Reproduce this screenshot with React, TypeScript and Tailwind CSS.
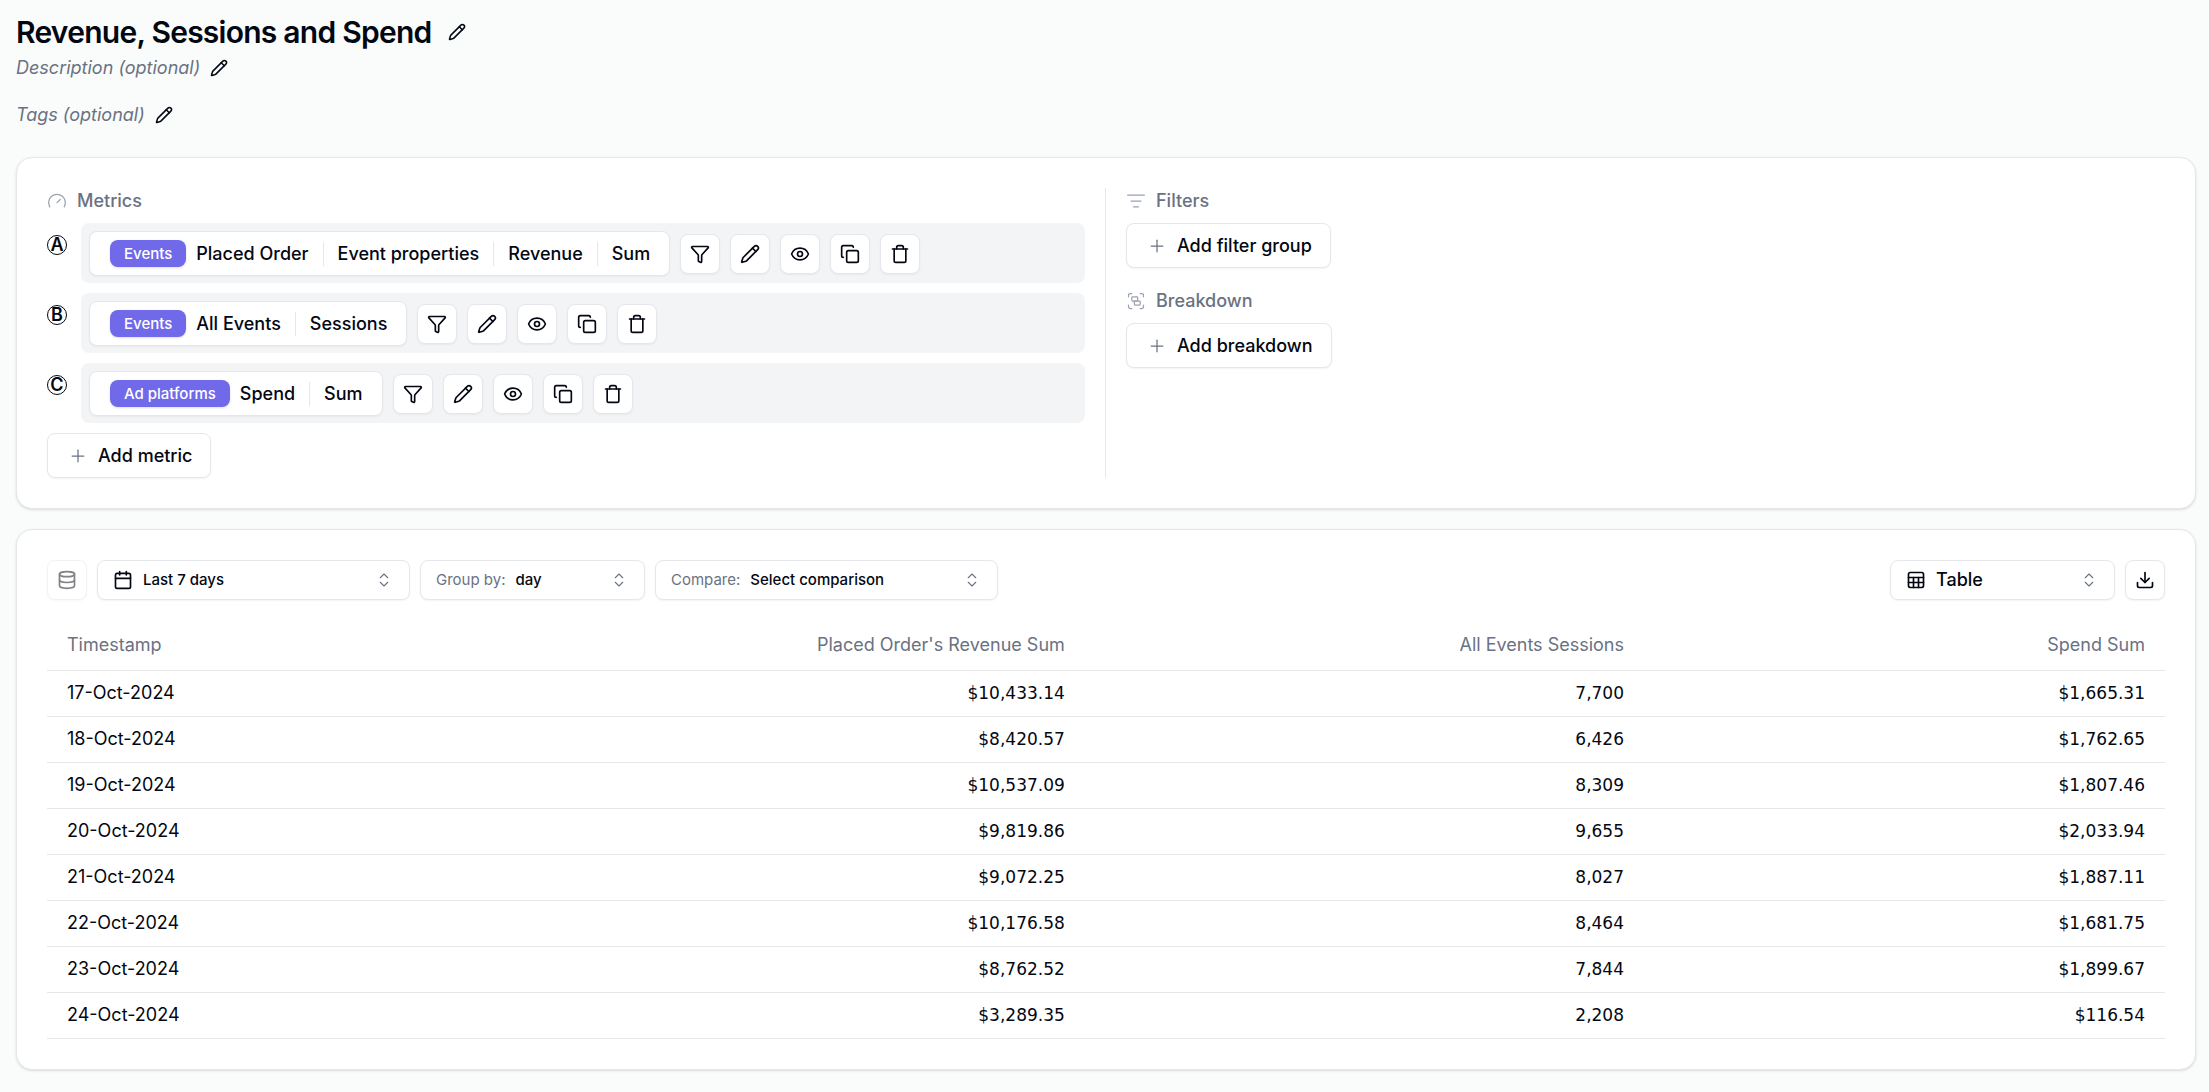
import React from 'react';
import {
  Calendar,
  ChevronsUpDown,
  Copy,
  Database,
  Download,
  Eye,
  Funnel,
  Gauge,
  Group,
  ListFilter,
  LucideIcon,
  Pencil,
  Plus,
  Sheet,
  Trash,
} from 'lucide-react';

interface Metric {
  letter: string;
  source: string;
  parts: string[];
}

const METRICS: Metric[] = [
  { letter: 'A', source: 'Events', parts: ['Placed Order', 'Event properties', 'Revenue', 'Sum'] },
  { letter: 'B', source: 'Events', parts: ['All Events', 'Sessions'] },
  { letter: 'C', source: 'Ad platforms', parts: ['Spend', 'Sum'] },
];

const METRIC_ACTIONS: { label: string; Icon: LucideIcon }[] = [
  { label: 'Filter', Icon: Funnel },
  { label: 'Edit', Icon: Pencil },
  { label: 'Toggle visibility', Icon: Eye },
  { label: 'Duplicate', Icon: Copy },
  { label: 'Delete', Icon: Trash },
];

const ROWS = [
  ['17-Oct-2024', '$10,433.14', '7,700', '$1,665.31'],
  ['18-Oct-2024', '$8,420.57', '6,426', '$1,762.65'],
  ['19-Oct-2024', '$10,537.09', '8,309', '$1,807.46'],
  ['20-Oct-2024', '$9,819.86', '9,655', '$2,033.94'],
  ['21-Oct-2024', '$9,072.25', '8,027', '$1,887.11'],
  ['22-Oct-2024', '$10,176.58', '8,464', '$1,681.75'],
  ['23-Oct-2024', '$8,762.52', '7,844', '$1,899.67'],
  ['24-Oct-2024', '$3,289.35', '2,208', '$116.54'],
];

const Card: React.FC<{ children: React.ReactNode }> = ({ children }) => (
  <section className="rounded-2xl border border-gray-200 bg-white p-[30px] shadow-sm">{children}</section>
);

const EditButton: React.FC<{ label: string }> = ({ label }) => (
  <button type="button" aria-label={label} className="p-1">
    <Pencil className="size-[18px]" />
  </button>
);

const SectionTitle: React.FC<{ Icon: LucideIcon; children: React.ReactNode }> = ({ Icon, children }) => (
  <h2 className="mb-[10px] flex h-[25px] items-center gap-[10px] font-medium text-gray-500">
    <Icon className="size-5 text-gray-400" strokeWidth={1.5} />
    {children}
  </h2>
);

const AddButton: React.FC<{ children: React.ReactNode }> = ({ children }) => (
  <button
    type="button"
    className="flex h-[45px] items-center gap-[10px] rounded-lg border border-gray-200 bg-white pr-[18px] pl-5 font-medium shadow-xs"
  >
    <Plus className="size-5 text-gray-500" strokeWidth={1.5} />
    {children}
  </button>
);

const IconButton: React.FC<{ label: string; Icon: LucideIcon; disabled?: boolean }> = ({ label, Icon, disabled }) => (
  <button
    type="button"
    aria-label={label}
    disabled={disabled}
    className="flex size-10 items-center justify-center rounded-lg border border-gray-200 bg-white shadow-xs disabled:opacity-50"
  >
    <Icon className="size-5" />
  </button>
);

const MetricRow: React.FC<{ metric: Metric }> = ({ metric }) => (
  <li className="flex gap-[14px]">
    <span className="mt-3 flex size-5 items-center justify-center rounded-full border border-gray-950 font-semibold">
      {metric.letter}
    </span>
    <div className="flex flex-1 items-center gap-[10px] rounded-lg bg-gray-100 px-2 pt-2 pb-[7px]">
      <button
        type="button"
        className="flex h-[45px] items-center rounded-lg border border-gray-200 bg-white pr-[5px] pl-5 font-medium shadow-xs"
      >
        <span className="mr-[10px] flex h-[27px] items-center rounded-lg bg-[#7069ea] px-[14px] text-[15px] text-white shadow-sm">
          {metric.source}
        </span>
        {metric.parts.map((part, i) => (
          <React.Fragment key={part}>
            {i > 0 && <span className="mr-[14px] h-6 w-px bg-gray-200" />}
            <span className="mr-[14px]">{part}</span>
          </React.Fragment>
        ))}
      </button>
      {METRIC_ACTIONS.map(({ label, Icon }) => (
        <IconButton key={label} label={label} Icon={Icon} />
      ))}
    </div>
  </li>
);

interface PickerProps {
  name: string;
  value: string;
  prefix?: string;
  Icon?: LucideIcon;
  className: string;
}

const Picker: React.FC<PickerProps> = ({ name, value, prefix, Icon, className }) => (
  <label
    className={`flex h-10 items-center gap-[10px] rounded-lg border border-gray-200 bg-white pr-4 pl-[15px] font-medium shadow-xs ${className}`}
  >
    {Icon && <Icon className="size-5" />}
    {prefix && <span className="font-normal text-gray-500">{prefix}</span>}
    <select aria-label={name} className="min-w-0 flex-1 appearance-none bg-transparent outline-none">
      <option>{value}</option>
    </select>
    <ChevronsUpDown className="size-[18px] text-gray-500" strokeWidth={1.5} />
  </label>
);

const App: React.FC = () => {
  return (
    <main className="min-h-screen bg-[#fafcfb] pt-3 pr-[13px] pb-5 pl-4 font-[Inter,sans-serif] text-[18px] leading-6 text-gray-950">
      <header className="mb-[27px]">
        <div className="flex h-10 items-center gap-3">
          <h1 className="text-[30px] font-semibold tracking-tight">Revenue, Sessions and Spend</h1>
          <EditButton label="Edit title" />
        </div>
        <div className="flex h-8 items-center gap-[6px]">
          <span className="text-gray-500 italic">Description (optional)</span>
          <EditButton label="Edit description" />
        </div>
        <div className="mt-4 flex h-[30px] items-center gap-[6px]">
          <span className="text-gray-500 italic">Tags (optional)</span>
          <EditButton label="Edit tags" />
        </div>
      </header>

      <div className="flex flex-col gap-5">
        <Card>
          <div className="grid grid-cols-2">
            <div className="border-r border-gray-200 pr-5">
              <SectionTitle Icon={Gauge}>Metrics</SectionTitle>
              <ul className="mb-[10px] flex flex-col gap-[10px]">
                {METRICS.map((metric) => (
                  <MetricRow key={metric.letter} metric={metric} />
                ))}
              </ul>
              <AddButton>Add metric</AddButton>
            </div>
            <div className="pl-5">
              <SectionTitle Icon={ListFilter}>Filters</SectionTitle>
              <AddButton>Add filter group</AddButton>
              <div className="mt-5">
                <SectionTitle Icon={Group}>Breakdown</SectionTitle>
                <AddButton>Add breakdown</AddButton>
              </div>
            </div>
          </div>
        </Card>

        <Card>
          <div className="mb-5 flex gap-[10px]">
            <IconButton label="Data source" Icon={Database} disabled />
            <Picker name="Date range" value="Last 7 days" Icon={Calendar} className="w-[313px] text-[15px]" />
            <Picker name="Group by" prefix="Group by:" value="day" className="w-[225px] text-[15px]" />
            <Picker name="Compare" prefix="Compare:" value="Select comparison" className="w-[343px] text-[15px]" />
            <Picker name="View" value="Table" Icon={Sheet} className="ml-auto w-[225px]" />
            <IconButton label="Download" Icon={Download} />
          </div>
          <table className="w-full">
            <thead>
              <tr className="h-[50px] border-b border-gray-200 text-gray-500">
                <th className="w-[22%] px-5 text-left font-normal">Timestamp</th>
                <th className="w-[27%] px-5 text-right font-normal">Placed Order's Revenue Sum</th>
                <th className="px-5 text-right font-normal">All Events Sessions</th>
                <th className="w-[521px] px-5 text-right font-normal">Spend Sum</th>
              </tr>
            </thead>
            <tbody>
              {ROWS.map(([date, ...values]) => (
                <tr key={date} className="h-[46px] border-b border-gray-200">
                  <td className="px-5">{date}</td>
                  {values.map((value, i) => (
                    <td key={i} className="px-5 text-right font-['DejaVu_Sans',sans-serif] text-[17px]">
                      {value}
                    </td>
                  ))}
                </tr>
              ))}
            </tbody>
          </table>
        </Card>
      </div>
    </main>
  );
};

export default App;
